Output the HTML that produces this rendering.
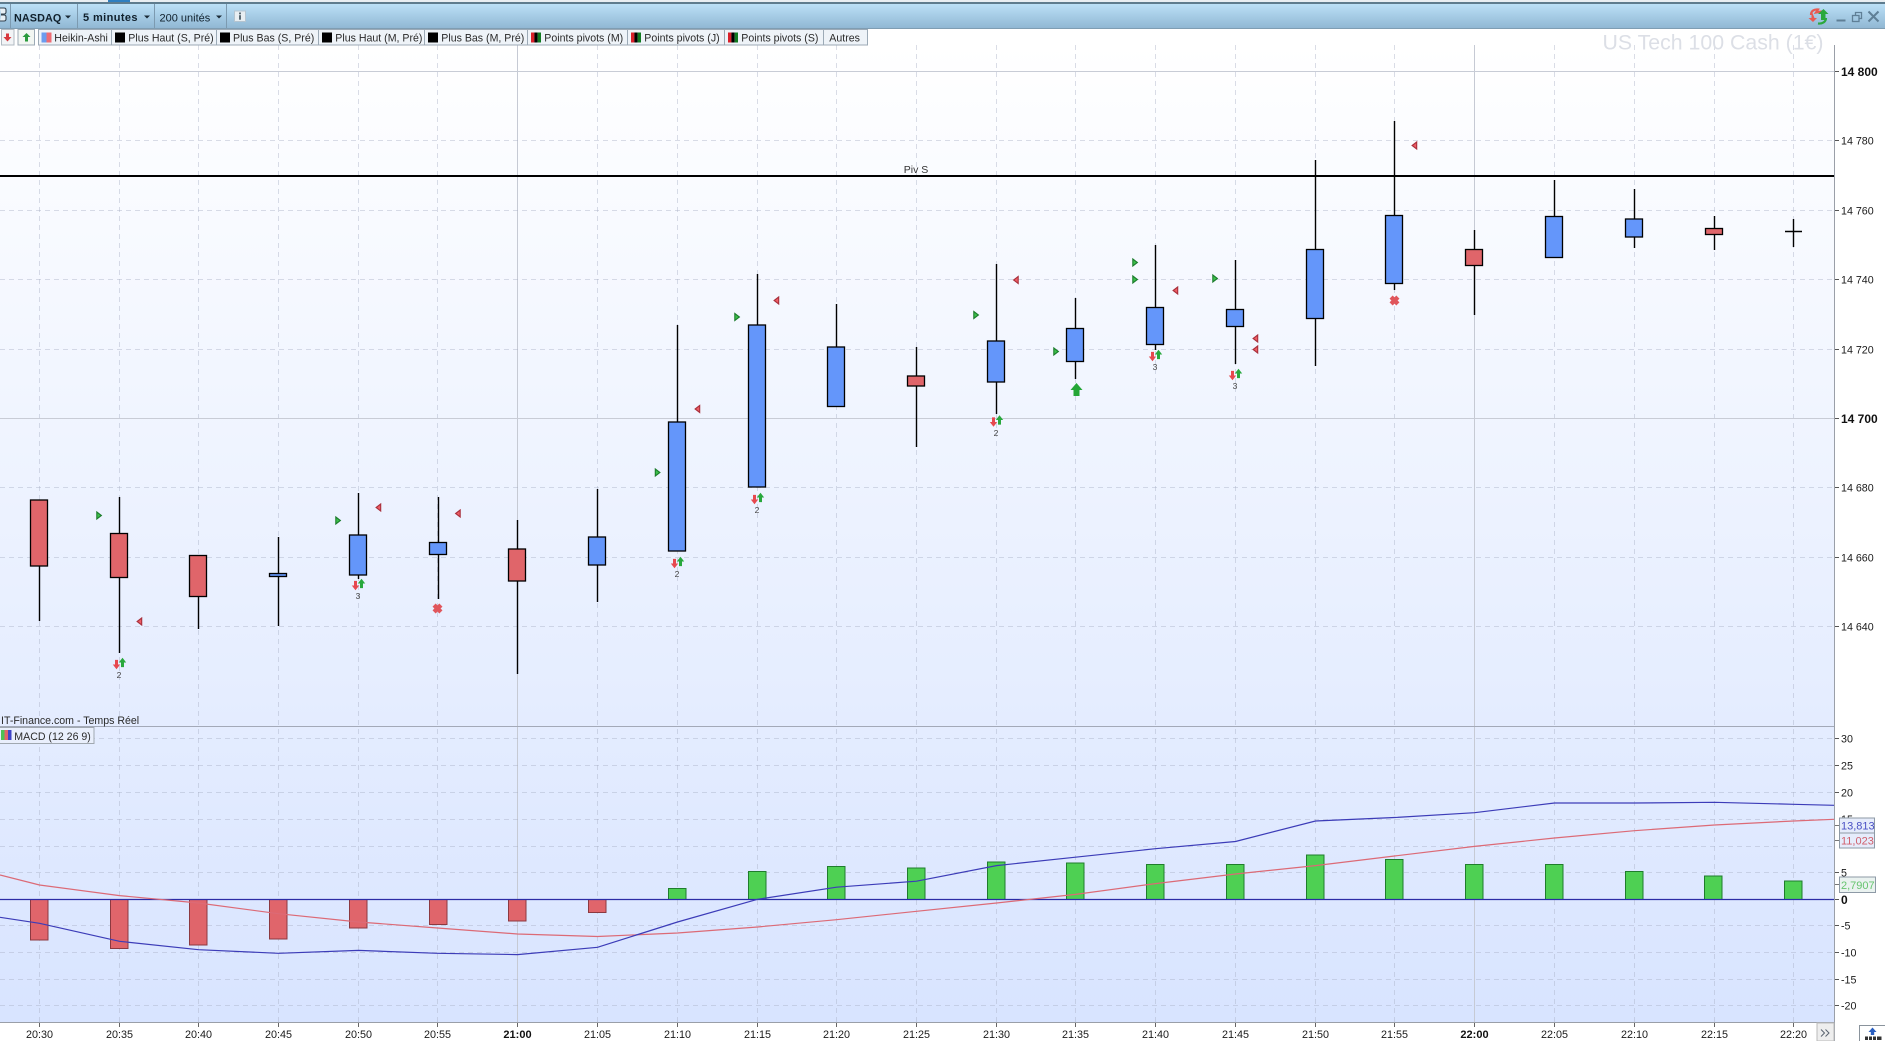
<!DOCTYPE html>
<html><head><meta charset="utf-8"><title>NASDAQ</title>
<style>
html,body{margin:0;padding:0;background:#fff;width:1885px;height:1041px;overflow:hidden}
svg{display:block}
text{font-family:"Liberation Sans",sans-serif;fill:#222}
.lg{font-size:10.6px;fill:#2a2a2a}
.ax{font-size:10.7px;fill:#1a1a1a}
.axb{font-size:12px;font-weight:bold;fill:#111}
.t{font-size:10.8px;text-anchor:middle;fill:#1a1a1a}
.tb{font-size:11px;font-weight:bold;text-anchor:middle;fill:#111}
.n{font-size:8.5px;text-anchor:middle;fill:#444}
.g{stroke:#a8aec4;stroke-opacity:.42;stroke-width:1;stroke-dasharray:5 4;fill:none}
.w{stroke:#000;stroke-width:1.4}
.bb{fill:#6496fa;stroke:#000;stroke-width:1.3}
.br{fill:#e0656a;stroke:#000;stroke-width:1.3}
.mg{fill:#4ed053;stroke:#1f7d2c;stroke-width:1}
.mr{fill:#e0656b;stroke:#8c3940;stroke-width:1}
.cell{fill:#eef3f8;stroke:#9caab6;stroke-width:1}
</style></head><body>
<svg width="1885" height="1041" viewBox="0 0 1885 1041" xmlns="http://www.w3.org/2000/svg">
<defs>
<linearGradient id="bg" x1="0" y1="0" x2="0" y2="1"><stop offset="0" stop-color="#ffffff"/><stop offset="1" stop-color="#d8e4ff"/></linearGradient>
<linearGradient id="tb" x1="0" y1="0" x2="0" y2="1"><stop offset="0" stop-color="#bbe0f7"/><stop offset="1" stop-color="#8fb6d2"/></linearGradient>
<path id="gt" d="M-2.2-3.5L2.4 0L-2.2 3.5Z" fill="#3cc04a" stroke="#1c7d2c" stroke-width="1.1"/>
<path id="rt" d="M2.2-3.5L-2.4 0L2.2 3.5Z" fill="#ee5c64" stroke="#a8303c" stroke-width="1.1"/>
<path id="ru" d="M-1.5-4.6H1.5V0H3.7L0 4.7L-3.7 0H-1.5Z" fill="#e6484f"/>
<path id="gu" d="M-1.5 4.6H1.5V0H3.7L0-4.7L-3.7 0H-1.5Z" fill="#28a83c"/>
<g id="x"><path d="M-3.4-3.4L3.4 3.4M3.4-3.4L-3.4 3.4" stroke="#e0565c" stroke-width="4.4" fill="none"/></g>
</defs>

<!-- panels -->
<rect x="0" y="45" width="1834" height="977" fill="url(#bg)"/>

<!-- vertical grid -->
<path class="g" d="M39.5 45V1022M119.5 45V1022M198.5 45V1022M278.5 45V1022M358.5 45V1022M437.5 45V1022M597.5 45V1022M677.5 45V1022M757.5 45V1022M836.5 45V1022M916.5 45V1022M996.5 45V1022M1075.5 45V1022M1155.5 45V1022M1235.5 45V1022M1315.5 45V1022M1394.5 45V1022M1554.5 45V1022M1634.5 45V1022M1714.5 45V1022M1793.5 45V1022"/>
<path d="M517.5 45V1022M1474.5 45V1022" stroke="#c6cad4" stroke-width="1"/>
<!-- horizontal grid price -->
<path class="g" d="M0 140.5H1834M0 210.5H1834M0 279.5H1834M0 349.5H1834M0 487.5H1834M0 557.5H1834M0 626.5H1834"/>
<path d="M0 71.5H1834M0 418.5H1834" stroke="#c8ccd6" stroke-width="1"/>
<!-- horizontal grid macd -->
<path class="g" d="M0 738.5H1834M0 765.5H1834M0 792.5H1834M0 819.5H1834M0 846.5H1834M0 872.5H1834M0 925.5H1834M0 952.5H1834M0 979.5H1834M0 1005.5H1834"/>

<!-- Piv S -->
<path d="M0 176H1834" stroke="#000" stroke-width="2"/>
<text x="916" y="173" style="font-size:10.5px;text-anchor:middle;fill:#333">Piv S</text>

<!-- wicks -->
<path class="w" d="M39.5 566V621M119.5 497V653M198.5 596V629M278.5 537V626M358.5 493V579M438.5 497V599M517.5 520V674M597.5 489V602M677.5 325V422M757.5 274V325M836.5 304V347M916.5 347V447M996.5 264V414M1075.5 298V379M1155.5 245V307M1155.5 344V350M1235.5 260V364M1315.5 160V366M1394.5 121V290M1474.5 230V315M1554.5 180V216M1634.5 189V248M1714.5 216V250M1793.5 219V247"/>
<path d="M1785 231.5H1802" stroke="#000" stroke-width="1.6"/>
<!-- bodies -->
<rect class="br" x="30.5" y="500" width="17" height="66"/>
<rect class="br" x="110.5" y="533.5" width="17" height="44"/>
<rect class="br" x="189.5" y="555.5" width="17" height="41"/>
<rect class="bb" x="269.5" y="573.5" width="17" height="3"/>
<rect class="bb" x="349.5" y="535" width="17" height="40"/>
<rect class="bb" x="429.5" y="542.5" width="17" height="12"/>
<rect class="br" x="508.5" y="549" width="17" height="32"/>
<rect class="bb" x="588.5" y="537" width="17" height="28"/>
<rect class="bb" x="668.5" y="422" width="17" height="129"/>
<rect class="bb" x="748.5" y="325" width="17" height="162"/>
<rect class="bb" x="827.5" y="347" width="17" height="59.5"/>
<rect class="br" x="907.5" y="376" width="17" height="10"/>
<rect class="bb" x="987.5" y="341" width="17" height="41"/>
<rect class="bb" x="1066.5" y="328.5" width="17" height="33"/>
<rect class="bb" x="1146.5" y="307.5" width="17" height="37"/>
<rect class="bb" x="1226.5" y="309.5" width="17" height="17"/>
<rect class="bb" x="1306.5" y="249.5" width="17" height="69"/>
<rect class="bb" x="1385.5" y="215.5" width="17" height="68"/>
<rect class="br" x="1465.5" y="249.5" width="17" height="16"/>
<rect class="bb" x="1545.5" y="216.5" width="17" height="41"/>
<rect class="bb" x="1625.5" y="219" width="17" height="18"/>
<rect class="br" x="1705.5" y="228.5" width="17" height="6"/>

<!-- right-pointing green markers -->
<use href="#gt" x="99" y="515.5"/><use href="#gt" x="338" y="520.5"/><use href="#gt" x="737" y="317"/><use href="#gt" x="657.5" y="472.5"/><use href="#gt" x="976" y="315"/><use href="#gt" x="1056" y="351.5"/><use href="#gt" x="1135" y="262.5"/><use href="#gt" x="1135" y="279.5"/><use href="#gt" x="1215" y="278.5"/>
<!-- left-pointing red markers -->
<use href="#rt" x="139.5" y="621.5"/><use href="#rt" x="378.5" y="507.5"/><use href="#rt" x="458" y="513.5"/><use href="#rt" x="697.5" y="409"/><use href="#rt" x="776.5" y="300.5"/><use href="#rt" x="1016" y="280"/><use href="#rt" x="1175.5" y="290.5"/><use href="#rt" x="1255.5" y="338.5"/><use href="#rt" x="1255.5" y="349.5"/><use href="#rt" x="1414.5" y="145.5"/>
<!-- double arrows -->
<use href="#ru" x="116.5" y="664.5"/><use href="#gu" x="122.5" y="662.5"/><text class="n" x="119" y="678">2</text>
<use href="#ru" x="355.5" y="585.5"/><use href="#gu" x="361.5" y="583.5"/><text class="n" x="358" y="599">3</text>
<use href="#ru" x="674.5" y="563.5"/><use href="#gu" x="680.5" y="561.5"/><text class="n" x="677" y="577">2</text>
<use href="#ru" x="754.5" y="499.5"/><use href="#gu" x="760.5" y="497.5"/><text class="n" x="757" y="513">2</text>
<use href="#ru" x="993.5" y="422"/><use href="#gu" x="999.5" y="420"/><text class="n" x="996" y="436">2</text>
<use href="#ru" x="1152.5" y="356.5"/><use href="#gu" x="1158.5" y="354.5"/><text class="n" x="1155" y="370">3</text>
<use href="#ru" x="1232.5" y="375.5"/><use href="#gu" x="1238.5" y="373.5"/><text class="n" x="1235" y="389">3</text>
<!-- big up arrow -->
<path d="M1076.5 383L1082.5 390H1079.5V396H1073.5V390H1070.5Z" fill="#24a636"/>
<!-- crosses -->
<use href="#x" x="437.5" y="608.5"/><use href="#x" x="1394.5" y="300.5"/>

<!-- panel separator -->
<path d="M0 726.5H1834" stroke="#a3a9b8" stroke-width="1"/>
<text class="lg" x="1" y="724">IT-Finance.com - Temps Réel</text>

<!-- MACD legend -->
<rect x="-1" y="727.5" width="95" height="16" fill="#e9effc" stroke="#a0a8b0"/>
<rect x="1" y="730" width="3.5" height="10" fill="#4ec255"/><rect x="4.5" y="730" width="3.5" height="10" fill="#e0656b"/><rect x="8" y="730" width="3.5" height="10" fill="#3f44c8"/>
<text class="lg" x="14.3" y="740">MACD (12 26 9)</text>

<!-- MACD bars -->
<rect class="mr" x="30.5" y="899.5" width="17.5" height="40.5"/>
<rect class="mr" x="110.5" y="899.5" width="17.5" height="49"/>
<rect class="mr" x="189.5" y="899.5" width="17.5" height="45.5"/>
<rect class="mr" x="269.5" y="899.5" width="17.5" height="39.5"/>
<rect class="mr" x="349.5" y="899.5" width="17.5" height="28.5"/>
<rect class="mr" x="429.5" y="899.5" width="17.5" height="25"/>
<rect class="mr" x="508.5" y="899.5" width="17.5" height="21.5"/>
<rect class="mr" x="588.5" y="899.5" width="17.5" height="13"/>
<rect class="mg" x="668.5" y="888.5" width="17.5" height="11"/>
<rect class="mg" x="748.5" y="871.5" width="17.5" height="28"/>
<rect class="mg" x="827.5" y="866.5" width="17.5" height="33"/>
<rect class="mg" x="907.5" y="868" width="17.5" height="31.5"/>
<rect class="mg" x="987.5" y="862" width="17.5" height="37.5"/>
<rect class="mg" x="1066.5" y="863" width="17.5" height="36.5"/>
<rect class="mg" x="1146.5" y="864.5" width="17.5" height="35"/>
<rect class="mg" x="1226.5" y="864.5" width="17.5" height="35"/>
<rect class="mg" x="1306.5" y="855" width="17.5" height="44.5"/>
<rect class="mg" x="1385.5" y="859.5" width="17.5" height="40"/>
<rect class="mg" x="1465.5" y="864.5" width="17.5" height="35"/>
<rect class="mg" x="1545.5" y="864.5" width="17.5" height="35"/>
<rect class="mg" x="1625.5" y="871.5" width="17.5" height="28"/>
<rect class="mg" x="1704.5" y="876" width="17.5" height="23.5"/>
<rect class="mg" x="1784.5" y="881" width="17.5" height="18.5"/>
<path d="M0 899.5H1834" stroke="#2c2ca6" stroke-width="1.3"/>
<!-- MACD lines -->
<polyline fill="none" stroke="#dc6a76" stroke-width="1.2" points="0,875 39.5,885 119.5,895.6 198.5,903 278.5,913.7 358.5,922 437.5,928 517.5,934 597.5,936.5 677.5,933 757.5,927 836.5,919.7 916.5,911.3 996.5,903 1075.5,894.4 1155.5,883.6 1235.5,874 1315.5,865.6 1394.5,856 1474.5,846.4 1554.5,838 1634.5,830.7 1714.5,825 1793.5,821 1834,819.3"/>
<polyline fill="none" stroke="#3c3cb8" stroke-width="1.2" points="0,917.3 39.5,923.3 119.5,941.3 198.5,949.7 278.5,953.3 358.5,950.4 437.5,953.3 517.5,954.6 597.5,947.3 677.5,922 757.5,899.3 836.5,887.2 916.5,881.2 996.5,865.6 1075.5,857.2 1155.5,848.7 1235.5,841.5 1315.5,821 1394.5,817.5 1474.5,812.7 1554.5,803 1634.5,803 1714.5,802.3 1793.5,804.3 1834,805.3"/>

<!-- axis frames -->
<rect x="0" y="1022" width="1885" height="19" fill="#fff"/>
<rect x="1835" y="45" width="50" height="996" fill="#fff"/>
<path d="M1834.5 45V1041" stroke="#9a9fa8" stroke-width="1"/>
<path d="M0 1022.5H1834" stroke="#9a9fa8" stroke-width="1"/>

<!-- price ticks and labels -->
<path d="M1835 71.5H1839M1835 140.5H1839M1835 210.5H1839M1835 279.5H1839M1835 349.5H1839M1835 418.5H1839M1835 487.5H1839M1835 557.5H1839M1835 626.5H1839M1835 738.5H1839M1835 765.5H1839M1835 792.5H1839M1835 872.5H1839M1835 899.5H1839M1835 925.5H1839M1835 952.5H1839M1835 979.5H1839M1835 1005.5H1839" stroke="#555" stroke-width="1"/>
<text class="axb" x="1841" y="76">14 800</text>
<text class="ax" x="1841" y="144.5">14 780</text>
<text class="ax" x="1841" y="214.5">14 760</text>
<text class="ax" x="1841" y="283.5">14 740</text>
<text class="ax" x="1841" y="353.5">14 720</text>
<text class="axb" x="1841" y="423">14 700</text>
<text class="ax" x="1841" y="491.5">14 680</text>
<text class="ax" x="1841" y="561.5">14 660</text>
<text class="ax" x="1841" y="630.5">14 640</text>
<!-- macd labels -->
<text class="ax" x="1841" y="742.5">30</text>
<text class="ax" x="1841" y="769.5">25</text>
<text class="ax" x="1841" y="796.5">20</text>
<text class="ax" x="1841" y="823">15</text>
<text class="ax" x="1841" y="876.5">5</text>
<text class="axb" x="1841" y="904">0</text>
<text class="ax" x="1841" y="929.5">-5</text>
<text class="ax" x="1841" y="956.5">-10</text>
<text class="ax" x="1841" y="983.5">-15</text>
<text class="ax" x="1841" y="1009.5">-20</text>
<!-- value tags -->
<path d="M1835 825.5H1839M1835 840.5H1839M1835 884.5H1839" stroke="#777"/>
<rect x="1839.5" y="818" width="35" height="15" fill="#e6ecfb" stroke="#8e9aa6"/>
<rect x="1839.5" y="833" width="35" height="15" fill="#e6ecfb" stroke="#8e9aa6"/>
<rect x="1839.5" y="877" width="36" height="15.5" fill="#eaf2f0" stroke="#8e9aa6"/>
<text x="1841" y="829.5" style="font-size:11px;fill:#4a50c4">13,813</text>
<text x="1841" y="844.5" style="font-size:11px;fill:#d0606c">11,023</text>
<text x="1841" y="889" style="font-size:11px;fill:#66c46e">2,7907</text>

<!-- time ticks -->
<path d="M39.5 1023V1027M119.5 1023V1027M198.5 1023V1027M278.5 1023V1027M358.5 1023V1027M437.5 1023V1027M517.5 1023V1027M597.5 1023V1027M677.5 1023V1027M757.5 1023V1027M836.5 1023V1027M916.5 1023V1027M996.5 1023V1027M1075.5 1023V1027M1155.5 1023V1027M1235.5 1023V1027M1315.5 1023V1027M1394.5 1023V1027M1474.5 1023V1027M1554.5 1023V1027M1634.5 1023V1027M1714.5 1023V1027M1793.5 1023V1027" stroke="#666"/>
<text class="t" x="39.5" y="1038">20:30</text><text class="t" x="119.5" y="1038">20:35</text><text class="t" x="198.5" y="1038">20:40</text><text class="t" x="278.5" y="1038">20:45</text><text class="t" x="358.5" y="1038">20:50</text><text class="t" x="437.5" y="1038">20:55</text><text class="tb" x="517.5" y="1038">21:00</text><text class="t" x="597.5" y="1038">21:05</text><text class="t" x="677.5" y="1038">21:10</text><text class="t" x="757.5" y="1038">21:15</text><text class="t" x="836.5" y="1038">21:20</text><text class="t" x="916.5" y="1038">21:25</text><text class="t" x="996.5" y="1038">21:30</text><text class="t" x="1075.5" y="1038">21:35</text><text class="t" x="1155.5" y="1038">21:40</text><text class="t" x="1235.5" y="1038">21:45</text><text class="t" x="1315.5" y="1038">21:50</text><text class="t" x="1394.5" y="1038">21:55</text><text class="tb" x="1474.5" y="1038">22:00</text><text class="t" x="1554.5" y="1038">22:05</text><text class="t" x="1634.5" y="1038">22:10</text><text class="t" x="1714.5" y="1038">22:15</text><text class="t" x="1793.5" y="1038">22:20</text>

<!-- bottom-right buttons -->
<rect x="1817" y="1023" width="17" height="18" fill="#eeeeee" stroke="#bbb"/>
<path d="M1821 1029.5L1824.5 1033L1821 1036.5M1825.5 1029.5L1829 1033L1825.5 1036.5" fill="none" stroke="#5a6470" stroke-width="1"/>
<rect x="1859.5" y="1025.5" width="26" height="16" fill="#fff" stroke="#8a939c"/>
<path d="M1872.5 1027.5L1876.5 1032H1874.2V1035H1870.8V1032H1868.5Z" fill="#2a5fc0"/>
<path d="M1865 1036.5H1881.5V1040H1865Z" fill="#333"/>
<path d="M1868.5 1036V1040M1872.5 1036V1040M1876.5 1036V1040" stroke="#fff"/>

<!-- top strip + toolbar -->
<rect x="0" y="0" width="1885" height="3" fill="#e8eef2"/>
<rect x="108" y="0" width="22" height="2.5" fill="#2f7fc0"/>
<rect x="0" y="2" width="1885" height="2" fill="#5e7c8e"/>
<rect x="0" y="4" width="1885" height="25" fill="url(#tb)"/>
<path d="M0 28.5H1885" stroke="#7f9db2"/>
<path d="M10.5 4V28M77.5 4V28M154.5 4V28M226.5 4V28" stroke="#7c9ab0" stroke-width="1"/>
<path d="M0 8H4Q6 8 6 10V12Q6 14 4 14H1M1 15H4Q6 15 6 17V19Q6 21 4 21H0" fill="#e8f0f6" stroke="#33424e" stroke-width="1.1"/>
<text x="14" y="21.5" style="font-size:10.8px;font-weight:bold;letter-spacing:.1px;fill:#10202c">NASDAQ</text>
<path d="M65 15.5H71L68 18.5Z" fill="#1a2a36"/>
<text x="83" y="21" style="font-size:11px;font-weight:bold;letter-spacing:.4px;fill:#10202c">5 minutes</text>
<path d="M144 15.5H150L147 18.5Z" fill="#1a2a36"/>
<text x="159.5" y="21.5" style="font-size:11px;fill:#10202c">200 unités</text>
<path d="M216 15.5H222L219 18.5Z" fill="#1a2a36"/>
<rect x="234.5" y="11" width="11" height="10.5" fill="#e8eef2" stroke="#b4c4d0"/>
<rect x="239" y="12.5" width="2" height="1.8" fill="#5a6a74"/><rect x="239" y="15.2" width="2" height="4.5" fill="#5a6a74"/>

<!-- window icons -->
<path d="M1811 15C1811 11 1814 9 1818 9.5L1816 12.5L1822 11.5" fill="none" stroke="#e85a52" stroke-width="2.2"/>
<path d="M1811.5 10.5V18H1808.5L1813 22L1817 18H1814.5" fill="#e85a52"/>
<path d="M1826 18C1826 22 1822 24 1818 23.5" fill="none" stroke="#2aa83c" stroke-width="2.2"/>
<path d="M1821 20V14H1818L1823.5 9L1828.5 14H1825.5V20Z" fill="#2aa83c"/>
<path d="M1836.5 20.5H1845.5" stroke="#5f7f96" stroke-width="2"/>
<rect x="1852.5" y="15.5" width="6.5" height="6" fill="none" stroke="#5f7f96" stroke-width="1.3"/>
<path d="M1855.5 15V12.5H1861.5V18.5H1859.5" fill="none" stroke="#5f7f96" stroke-width="1.3"/>
<path d="M1868.5 11.5L1878.5 21.5M1878.5 11.5L1868.5 21.5" stroke="#5f7f96" stroke-width="2"/>

<!-- legend row -->
<rect x="1.5" y="29.5" width="12.5" height="15.5" fill="#f2f4f6" stroke="#b0bac2"/>
<path d="M6 33.5V37H3.5L7.5 41.5L11.5 37H9V33.5Z" fill="#d8383e"/>
<rect x="18" y="29.5" width="16.5" height="15.5" fill="#f2f6f2" stroke="#9caab6"/>
<path d="M26.5 33L30.5 37H28V41.5H25V37H22.5Z" fill="#2a9a3c"/>
<rect class="cell" x="38.5" y="29.5" width="73" height="15.5"/>
<rect x="41.5" y="32.5" width="5" height="10" fill="#6c9cee"/><rect x="46.5" y="32.5" width="5" height="10" fill="#ee6c74"/>
<text class="lg" x="54.3" y="41.5">Heikin-Ashi</text>
<rect class="cell" x="111.5" y="29.5" width="105" height="15.5"/><rect x="115" y="32.5" width="10" height="10" fill="#000"/><text class="lg" x="128.3" y="41.5">Plus Haut (S, Pré)</text>
<rect class="cell" x="216.5" y="29.5" width="102" height="15.5"/><rect x="220" y="32.5" width="10" height="10" fill="#000"/><text class="lg" x="233" y="41.5">Plus Bas (S, Pré)</text>
<rect class="cell" x="318.5" y="29.5" width="106" height="15.5"/><rect x="322" y="32.5" width="10" height="10" fill="#000"/><text class="lg" x="335.3" y="41.5">Plus Haut (M, Pré)</text>
<rect class="cell" x="424.5" y="29.5" width="103" height="15.5"/><rect x="428" y="32.5" width="10" height="10" fill="#000"/><text class="lg" x="441.3" y="41.5">Plus Bas (M, Pré)</text>
<rect class="cell" x="527.5" y="29.5" width="100" height="15.5"/><rect x="531" y="32.5" width="3.4" height="10" fill="#d8202a"/><rect x="534.4" y="32.5" width="3.3" height="10" fill="#000"/><rect x="537.7" y="32.5" width="3.3" height="10" fill="#107a20"/><text class="lg" x="544.3" y="41.5">Points pivots (M)</text>
<rect class="cell" x="627.5" y="29.5" width="97" height="15.5"/><rect x="631" y="32.5" width="3.4" height="10" fill="#d8202a"/><rect x="634.4" y="32.5" width="3.3" height="10" fill="#000"/><rect x="637.7" y="32.5" width="3.3" height="10" fill="#107a20"/><text class="lg" x="644.3" y="41.5">Points pivots (J)</text>
<rect class="cell" x="724.5" y="29.5" width="99" height="15.5"/><rect x="728" y="32.5" width="3.4" height="10" fill="#d8202a"/><rect x="731.4" y="32.5" width="3.3" height="10" fill="#000"/><rect x="734.7" y="32.5" width="3.3" height="10" fill="#107a20"/><text class="lg" x="741.3" y="41.5">Points pivots (S)</text>
<rect class="cell" x="823.5" y="29.5" width="44" height="15.5"/><text class="lg" x="829.3" y="41.5">Autres</text>

<!-- watermark -->
<text x="1602.5" y="49.5" style="font-size:21.3px;fill:#dcdfe6">US Tech 100 Cash (1€)</text>
</svg>
</body></html>
